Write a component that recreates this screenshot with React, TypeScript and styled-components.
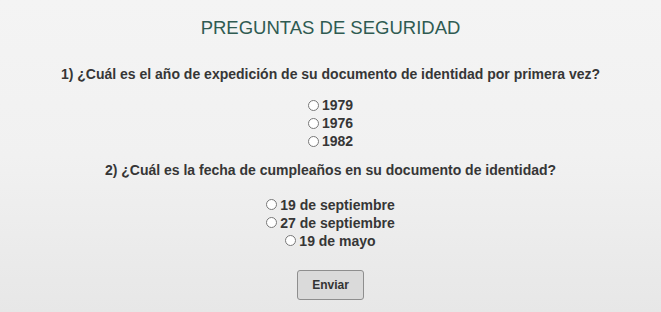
import { FC } from "react";
import styled, { createGlobalStyle } from "styled-components";

const GlobalStyle = createGlobalStyle`
  html, body {
    margin: 0;
    padding: 0;
  }
  body {
    font-family: "Liberation Sans", Arial, sans-serif;
    background: #f2f2f2;
  }
`;

const Page = styled.div`
  min-height: 312px;
  box-sizing: border-box;
  padding-top: 17px;
  background: linear-gradient(#f4f4f4 0%, #f1f1f1 50%, #e7e7e7 100%);
  text-align: center;
  color: #363636;
`;

const Title = styled.h1`
  margin: 0 0 26px;
  font-size: 18.5px;
  font-weight: normal;
  line-height: 22px;
  color: #2f5b52;
`;

const Question = styled.p`
  margin: 0;
  font-size: 14px;
  font-weight: bold;
  line-height: 18px;
`;

const Options = styled.div<{ $top: number; $bottom: number }>`
  display: flex;
  flex-direction: column;
  align-items: center;
  padding: ${(p) => p.$top}px 0 ${(p) => p.$bottom}px;
`;

const Option = styled.label`
  display: flex;
  align-items: center;
  font-size: 14px;
  font-weight: bold;
  line-height: 18px;
`;

const Radio = styled.input.attrs({ type: "radio" })`
  width: 11px;
  height: 11px;
  margin: 0 3px 0 0;
`;

const Button = styled.button`
  width: 67px;
  height: 30px;
  font-family: "Liberation Sans", Arial, sans-serif;
  font-size: 12px;
  font-weight: bold;
  color: #333;
  background: #dadada;
  border: 1px solid #8e8e8e;
  border-radius: 3px;
`;

interface QuestionData {
  name: string;
  text: string;
  answers: string[];
  top: number;
  bottom: number;
}

const questions: QuestionData[] = [
  {
    name: "q1",
    text: "1) ¿Cuál es el año de expedición de su documento de identidad por primera vez?",
    answers: ["1979", "1976", "1982"],
    top: 13,
    bottom: 11,
  },
  {
    name: "q2",
    text: "2) ¿Cuál es la fecha de cumpleaños en su documento de identidad?",
    answers: ["19 de septiembre", "27 de septiembre", "19 de mayo"],
    top: 16.5,
    bottom: 20.5,
  },
];

const App: FC = () => (
  <>
    <GlobalStyle />
    <Page>
      <Title>PREGUNTAS DE SEGURIDAD</Title>
      <form>
        {questions.map((q) => (
          <div key={q.name}>
            <Question>{q.text}</Question>
            <Options $top={q.top} $bottom={q.bottom}>
              {q.answers.map((a) => (
                <Option key={a}>
                  <Radio name={q.name} />
                  {a}
                </Option>
              ))}
            </Options>
          </div>
        ))}
        <Button type="button">Enviar</Button>
      </form>
    </Page>
  </>
);

export default App;
